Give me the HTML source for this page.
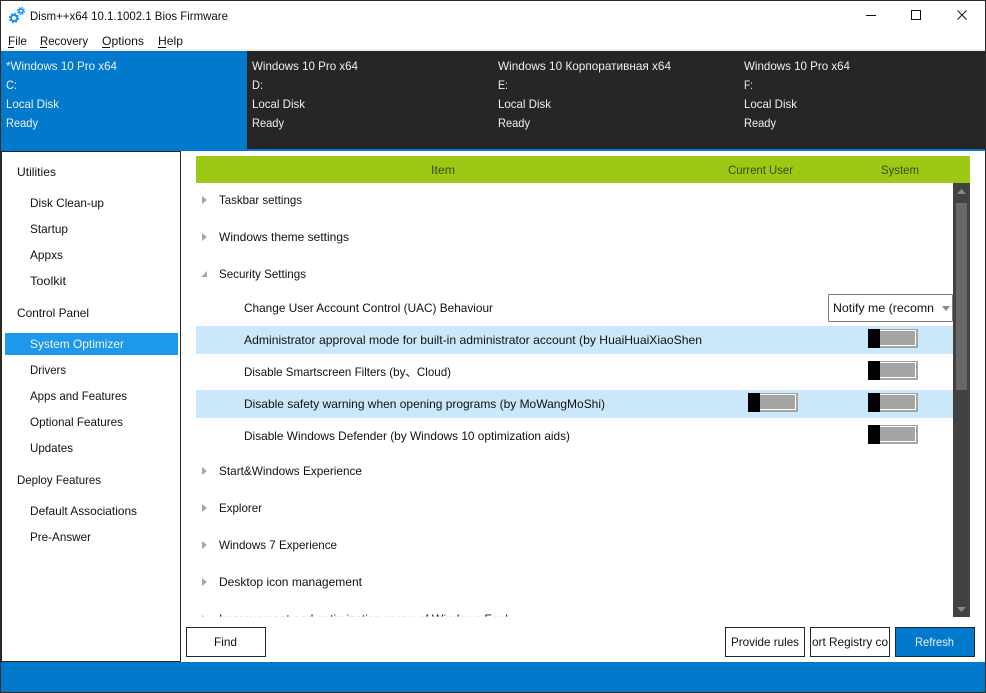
<!DOCTYPE html>
<html><head><meta charset="utf-8"><title>Dism++</title>
<style>
html,body{margin:0;padding:0;background:#fff;width:986px;height:693px;overflow:hidden}
svg{display:block}
text{font-family:"Liberation Sans","Noto Sans CJK SC",sans-serif;font-size:12px;fill:#111}
.w text{fill:#f0f0f0}
</style></head><body>
<svg width="986" height="693" viewBox="0 0 986 693" xmlns="http://www.w3.org/2000/svg">
<defs>
<clipPath id="rowclip"><rect x="196" y="600" width="757" height="16.6"/></clipPath>
<clipPath id="btnclip"><rect x="811" y="628" width="78" height="28"/></clipPath>
<g id="tg"><rect x="0" y="0" width="50" height="19" fill="#a5a5a5"/><path d="M12 1.5H47.5V16.5H12" fill="none" stroke="#fff" stroke-width="1"/><rect x="0" y="0" width="12" height="19" fill="#050205"/></g>
<path id="ar" d="M202 196L207 200L202 204Z" fill="#a6a6a6"/>
</defs>
<rect width="986" height="693" fill="#fff"/>
<!-- window frame -->
<rect x="0" y="0" width="986" height="1" fill="#2e2a26"/>
<rect x="0" y="0" width="1" height="693" fill="#2e2a26"/>
<rect x="985" y="0" width="1" height="693" fill="#2e2a26"/>
<rect x="0" y="692" width="986" height="1" fill="#2e2a26"/>
<!-- title icon -->
<g fill="none" stroke="#1e90ee">
<circle cx="14" cy="18" r="3" stroke-width="2"/>
<circle cx="14" cy="18" r="4.4" stroke-width="1.4" stroke-dasharray="2 1.45"/>
<circle cx="21" cy="11" r="2" stroke-width="1.6"/>
<circle cx="21" cy="11" r="3.4" stroke-width="1.2" stroke-dasharray="1.6 1.07"/>
</g>
<text x="30" y="20" textLength="198" lengthAdjust="spacingAndGlyphs">Dism++x64 10.1.1002.1 Bios Firmware</text>
<!-- window buttons -->
<rect x="866" y="15" width="10" height="1" fill="#111"/>
<rect x="911.5" y="10.5" width="9" height="9" fill="none" stroke="#111"/>
<path d="M957.5 10.5L966.5 19.5M966.5 10.5L957.5 19.5" stroke="#111" fill="none"/>
<!-- menu -->
<text x="8" y="45" textLength="19" lengthAdjust="spacingAndGlyphs">File</text>
<text x="40" y="45" textLength="48" lengthAdjust="spacingAndGlyphs">Recovery</text>
<text x="102" y="45" textLength="42" lengthAdjust="spacingAndGlyphs">Options</text>
<text x="158" y="45" textLength="25" lengthAdjust="spacingAndGlyphs">Help</text>
<g fill="#111"><rect x="8" y="47" width="6" height="1"/><rect x="40" y="47" width="7" height="1"/><rect x="102" y="47" width="8" height="1"/><rect x="158" y="47" width="8" height="1"/></g>
<!-- tabs -->
<rect x="1" y="49" width="984" height="2" fill="#f0f0f0"/>
<rect x="1" y="51" width="246" height="100" fill="#0179cd"/>
<rect x="247" y="51" width="738" height="98" fill="#262626"/>
<rect x="1" y="149" width="984" height="2" fill="#0179cd"/>
<g class="w">
<text x="6" y="70" textLength="111" lengthAdjust="spacingAndGlyphs">*Windows 10 Pro x64</text>
<text x="6" y="89" textLength="11" lengthAdjust="spacingAndGlyphs">C:</text>
<text x="6" y="108" textLength="53" lengthAdjust="spacingAndGlyphs">Local Disk</text>
<text x="6" y="127" textLength="32" lengthAdjust="spacingAndGlyphs">Ready</text>
<text x="252" y="70" textLength="106" lengthAdjust="spacingAndGlyphs">Windows 10 Pro x64</text>
<text x="252" y="89" textLength="11" lengthAdjust="spacingAndGlyphs">D:</text>
<text x="252" y="108" textLength="53" lengthAdjust="spacingAndGlyphs">Local Disk</text>
<text x="252" y="127" textLength="32" lengthAdjust="spacingAndGlyphs">Ready</text>
<text x="498" y="70" textLength="173" lengthAdjust="spacingAndGlyphs">Windows 10 Корпоративная x64</text>
<text x="498" y="89" textLength="10" lengthAdjust="spacingAndGlyphs">E:</text>
<text x="498" y="108" textLength="53" lengthAdjust="spacingAndGlyphs">Local Disk</text>
<text x="498" y="127" textLength="32" lengthAdjust="spacingAndGlyphs">Ready</text>
<text x="744" y="70" textLength="106" lengthAdjust="spacingAndGlyphs">Windows 10 Pro x64</text>
<text x="744" y="89" textLength="9" lengthAdjust="spacingAndGlyphs">F:</text>
<text x="744" y="108" textLength="53" lengthAdjust="spacingAndGlyphs">Local Disk</text>
<text x="744" y="127" textLength="32" lengthAdjust="spacingAndGlyphs">Ready</text>
</g>
<!-- sidebar -->
<rect x="1" y="151" width="180" height="1" fill="#262626"/>
<rect x="1" y="151" width="1" height="511" fill="#262626"/>
<rect x="180" y="151" width="1" height="511" fill="#262626"/>
<rect x="1" y="661" width="180" height="1" fill="#262626"/>
<rect x="5" y="333" width="173" height="22" fill="#1e98eb"/>
<text x="17" y="176" textLength="39" lengthAdjust="spacingAndGlyphs">Utilities</text>
<text x="30" y="207" textLength="74" lengthAdjust="spacingAndGlyphs">Disk Clean-up</text>
<text x="30" y="233" textLength="38" lengthAdjust="spacingAndGlyphs">Startup</text>
<text x="30" y="259" textLength="33" lengthAdjust="spacingAndGlyphs">Appxs</text>
<text x="30" y="285" textLength="36" lengthAdjust="spacingAndGlyphs">Toolkit</text>
<text x="17" y="317" textLength="72" lengthAdjust="spacingAndGlyphs">Control Panel</text>
<text x="30" y="348" textLength="94" lengthAdjust="spacingAndGlyphs" style="fill:#f2f2f2">System Optimizer</text>
<text x="30" y="374" textLength="36" lengthAdjust="spacingAndGlyphs">Drivers</text>
<text x="30" y="400" textLength="97" lengthAdjust="spacingAndGlyphs">Apps and Features</text>
<text x="30" y="426" textLength="93" lengthAdjust="spacingAndGlyphs">Optional Features</text>
<text x="30" y="452" textLength="43" lengthAdjust="spacingAndGlyphs">Updates</text>
<text x="17" y="484" textLength="84" lengthAdjust="spacingAndGlyphs">Deploy Features</text>
<text x="30" y="515" textLength="107" lengthAdjust="spacingAndGlyphs">Default Associations</text>
<text x="30" y="541" textLength="61" lengthAdjust="spacingAndGlyphs">Pre-Answer</text>
<!-- table header -->
<rect x="196" y="156" width="774" height="27" fill="#9bc914"/>
<text x="431" y="174" textLength="24" lengthAdjust="spacingAndGlyphs" style="fill:#3a4a10">Item</text>
<text x="728" y="174" textLength="65" lengthAdjust="spacingAndGlyphs" style="fill:#3a4a10">Current User</text>
<text x="881" y="174" textLength="38" lengthAdjust="spacingAndGlyphs" style="fill:#3a4a10">System</text>
<!-- highlights -->
<rect x="196" y="326" width="757" height="28" fill="#cbe8fb"/>
<rect x="196" y="390" width="757" height="28" fill="#cbe8fb"/>
<!-- scrollbar -->
<rect x="953" y="183" width="17" height="434" fill="#424242"/>
<rect x="956" y="203" width="11" height="187" fill="#686868"/>
<path d="M957 194L961.5 189L966 194Z" fill="#8a8a8a"/>
<path d="M957 607H966L961.5 612Z" fill="#8a8a8a"/>
<!-- tree rows -->
<use href="#ar"/>
<use href="#ar" y="37"/>
<path d="M201 277L207 271V277Z" fill="#a6a6a6"/>
<use href="#ar" y="271"/>
<use href="#ar" y="308"/>
<use href="#ar" y="345"/>
<use href="#ar" y="382"/>
<text x="219" y="204" textLength="83" lengthAdjust="spacingAndGlyphs">Taskbar settings</text>
<text x="219" y="241" textLength="130" lengthAdjust="spacingAndGlyphs">Windows theme settings</text>
<text x="219" y="278" textLength="87" lengthAdjust="spacingAndGlyphs">Security Settings</text>
<text x="244" y="312" textLength="249" lengthAdjust="spacingAndGlyphs">Change User Account Control (UAC) Behaviour</text>
<text x="244" y="344" textLength="458" lengthAdjust="spacingAndGlyphs">Administrator approval mode for built-in administrator account (by HuaiHuaiXiaoShen</text>
<text x="244" y="376" textLength="207" lengthAdjust="spacingAndGlyphs">Disable Smartscreen Filters (by、Cloud)</text>
<text x="244" y="408" textLength="361" lengthAdjust="spacingAndGlyphs">Disable safety warning when opening programs (by MoWangMoShi)</text>
<text x="244" y="440" textLength="326" lengthAdjust="spacingAndGlyphs">Disable Windows Defender (by Windows 10 optimization aids)</text>
<text x="219" y="475" textLength="143" lengthAdjust="spacingAndGlyphs">Start&amp;Windows Experience</text>
<text x="219" y="512" textLength="43" lengthAdjust="spacingAndGlyphs">Explorer</text>
<text x="219" y="549" textLength="118" lengthAdjust="spacingAndGlyphs">Windows 7 Experience</text>
<text x="219" y="586" textLength="143" lengthAdjust="spacingAndGlyphs">Desktop icon management</text>
<g clip-path="url(#rowclip)">
<use href="#ar" y="419"/>
<text x="219" y="623" textLength="289" lengthAdjust="spacingAndGlyphs">Improvement and optimization menu of Windows Feel</text>
</g>
<!-- combobox -->
<rect x="828.5" y="294.5" width="124" height="27" rx="1" fill="#fff" stroke="#7a7a7a"/>
<text x="833" y="312" textLength="101" lengthAdjust="spacingAndGlyphs">Notify me (recomn</text>
<path d="M942 306H950L946 311Z" fill="#8a8a8a"/>
<!-- toggles -->
<use href="#tg" x="868" y="329"/>
<use href="#tg" x="868" y="361"/>
<use href="#tg" x="748" y="393"/>
<use href="#tg" x="868" y="393"/>
<use href="#tg" x="868" y="425"/>
<!-- buttons -->
<rect x="186.5" y="627.5" width="79" height="29" fill="#fff" stroke="#262626"/>
<text x="214" y="646" textLength="23" lengthAdjust="spacingAndGlyphs">Find</text>
<rect x="725.5" y="627.5" width="79" height="29" fill="#fff" stroke="#262626"/>
<text x="731" y="646" textLength="68" lengthAdjust="spacingAndGlyphs">Provide rules</text>
<rect x="810.5" y="627.5" width="79" height="29" fill="#fff" stroke="#262626"/>
<g clip-path="url(#btnclip)"><text x="812" y="646" textLength="76" lengthAdjust="spacingAndGlyphs">ort Registry co</text></g>
<rect x="895.5" y="627.5" width="79" height="29" fill="#0179cd" stroke="#262626"/>
<text x="915" y="646" textLength="39" lengthAdjust="spacingAndGlyphs" style="fill:#f0f0f0">Refresh</text>
<!-- status bar -->
<rect x="1" y="662" width="984" height="30" fill="#0179cd"/>
</svg>
</body></html>
